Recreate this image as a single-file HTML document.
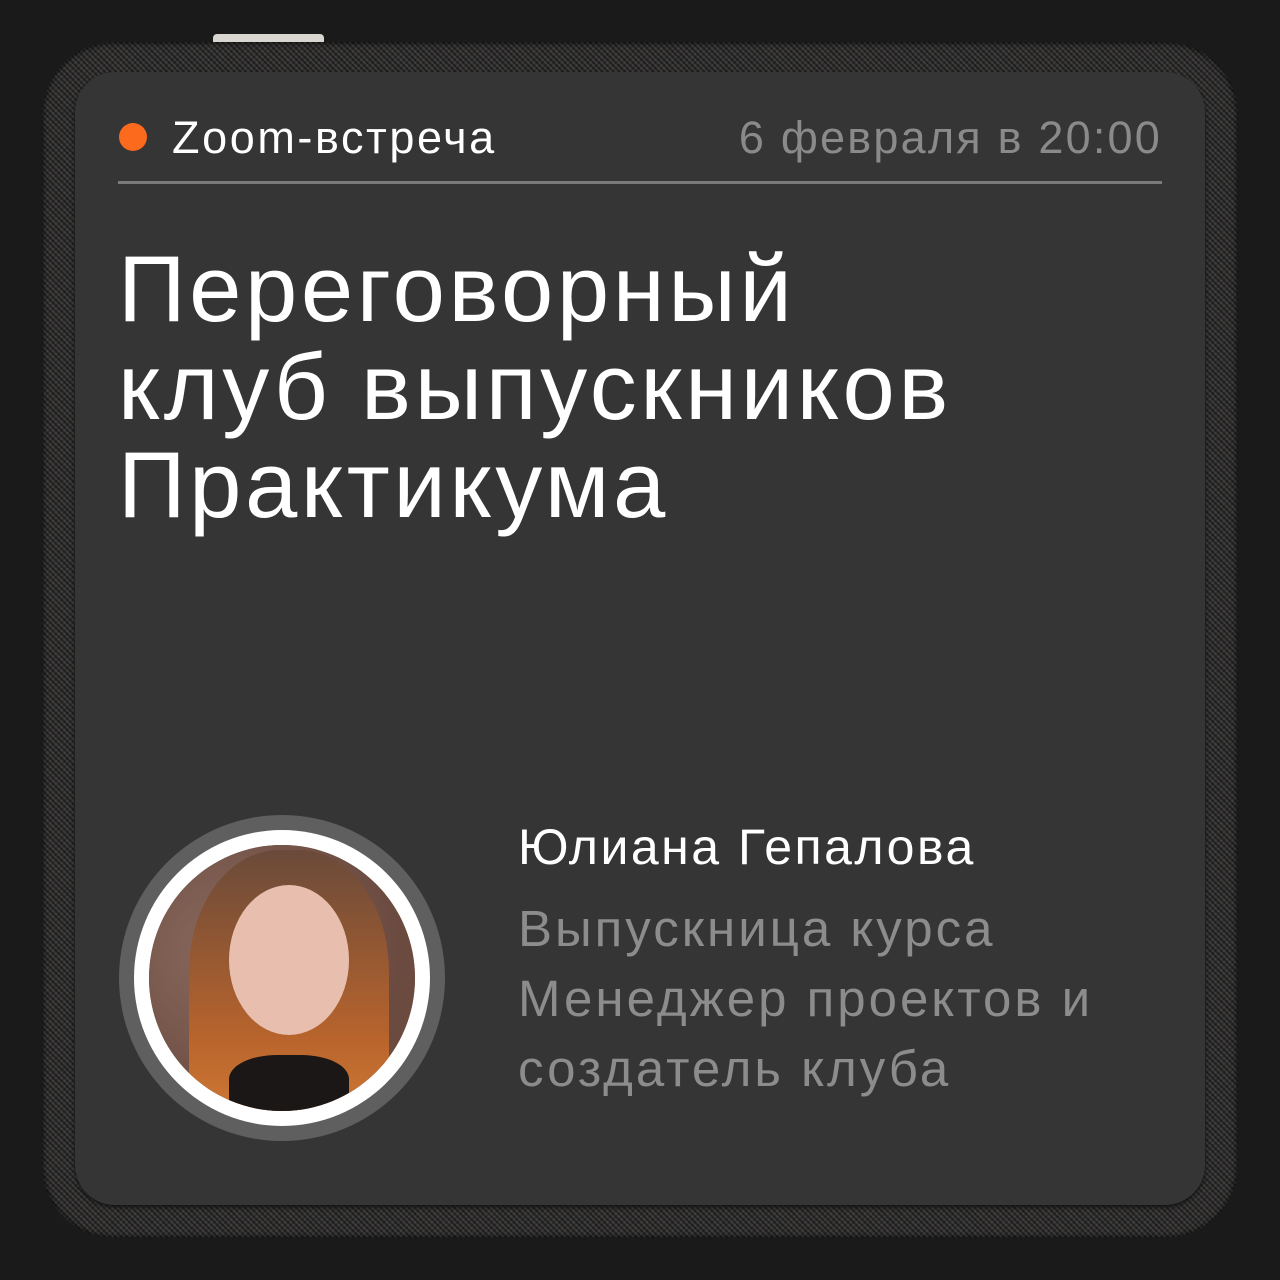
<!DOCTYPE html>
<html><head><meta charset="utf-8"><style>
body{margin:0;width:1280px;height:1280px;background:#1a1a1a;position:relative;overflow:hidden;font-family:"Liberation Sans","DejaVu Sans",sans-serif}
.btn{position:absolute;left:213px;top:34px;width:111px;height:14px;background:#d9d5d1;border-radius:4px}
.dev{position:absolute;left:42px;top:42px;width:1196px;height:1196px;border-radius:72px;background:#333231;
background-image:repeating-linear-gradient(45deg,rgba(0,0,0,.4) 0 2px,transparent 2px 4px),repeating-linear-gradient(-45deg,rgba(255,255,255,.07) 0 2px,transparent 2px 4px);box-shadow:inset 0 0 6px #000}
.scr{position:absolute;left:75px;top:72px;width:1130px;height:1133px;border-radius:40px;background:#353535;box-shadow:0 2px 4px #111}
.t{position:absolute;white-space:nowrap}
</style></head><body>
<div class="btn"></div>
<div class="dev"></div>
<div class="scr"></div>
<div style="position:absolute;left:119px;top:123px;width:28px;height:28px;border-radius:50%;background:#fc6a1d"></div>
<div class="t" style="left:172px;top:108px;font-size:45px;color:#fff;line-height:60px;letter-spacing:2.6px">Zoom-встреча</div>
<div class="t" style="right:118px;top:108px;font-size:45px;color:#8a8a8a;line-height:60px;letter-spacing:2.2px">6 февраля в 20:00</div>
<div style="position:absolute;left:118px;top:181px;width:1044px;height:3px;background:#7a7a7a"></div>
<div class="t" style="left:118px;top:240px;font-size:94px;color:#fff;line-height:98px;letter-spacing:3.6px">Переговорный<br>клуб выпускников<br>Практикума</div>
<div style="position:absolute;left:119px;top:815px;width:326px;height:326px;border-radius:50%;background:#5f5f5f"></div>
<div style="position:absolute;left:134px;top:830px;width:296px;height:296px;border-radius:50%;background:#fff"></div>
<div style="position:absolute;left:149px;top:845px;width:266px;height:266px;border-radius:50%;overflow:hidden;background:#7a5a4a">
 <div style="position:absolute;left:0;top:0;width:266px;height:266px;background:radial-gradient(circle at 30% 40%,#8a6a5e,#6b4a40 70%)"></div>
 <div style="position:absolute;left:40px;top:5px;width:200px;height:270px;border-radius:45% 45% 10% 10%;background:linear-gradient(#6a4a3a,#b8642c 70%,#d07a35)"></div>
 <div style="position:absolute;left:80px;top:40px;width:120px;height:150px;border-radius:50%;background:#e8bfae"></div>
 <div style="position:absolute;left:80px;top:210px;width:120px;height:60px;background:#1b1716;border-radius:40% 40% 0 0"></div>
</div>
<div class="t" style="left:518px;top:815px;font-size:50px;color:#fff;line-height:64px;letter-spacing:2.5px">Юлиана Гепалова</div>
<div class="t" style="left:518px;top:894px;font-size:51px;color:#8c8c8c;line-height:70px;letter-spacing:3px">Выпускница курса<br>Менеджер проектов и<br>создатель клуба</div>
</body></html>
